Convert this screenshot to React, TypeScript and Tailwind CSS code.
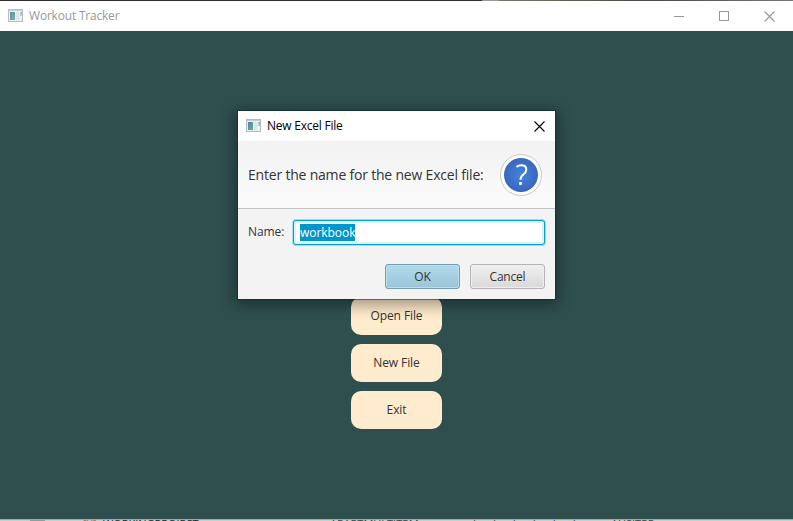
import React from 'react';

function AppIcon({ faded = false }: { faded?: boolean }) {
  return (
    <svg className={faded ? 'opacity-90' : ''} width="16" height="14" viewBox="0 0 16 14" shapeRendering="crispEdges">
      <defs>
        <linearGradient id="screen" x1="0" y1="0" x2="1" y2="1">
          <stop offset="0" stopColor="#4d84b4" />
          <stop offset="1" stopColor="#62b08a" />
        </linearGradient>
      </defs>
      <rect x="0.5" y="0.5" width="14" height="12" fill="#eceeef" stroke="#b5b9bc" />
      <rect x="1" y="1" width="13" height="1" fill="#c5cbd0" />
      <rect x="2" y="3" width="5" height="8" fill="url(#screen)" />
      <rect x="8" y="3" width="3" height="8" fill="#dfe2e4" />
      <rect x="12" y="3" width="2" height="4" fill="#a6d0c6" />
      <rect x="13" y="3" width="1" height="2" fill="#82aed0" />
    </svg>
  );
}

function CloseIcon({ color }: { color: string }) {
  return (
    <svg width="11" height="11" viewBox="0 0 11 11" stroke={color} strokeWidth="1.1">
      <path d="M.5 .5 10.5 10.5M10.5 .5 .5 10.5" />
    </svg>
  );
}

function QuestionIcon() {
  return (
    <svg width="42" height="42" viewBox="0 0 42 42">
      <defs>
        <radialGradient id="ball">
          <stop offset="0" stopColor="#4385dc" />
          <stop offset="1" stopColor="#3a66be" />
        </radialGradient>
      </defs>
      <circle cx="21" cy="21" r="20.5" fill="#fff" stroke="#c9c9c9" />
      <circle cx="21" cy="21" r="17" fill="url(#ball)" />
      <path d="M16.5 12.8C18 11.8 19.5 11.3 21.3 11.3c3.2 0 5 1.7 5 4.2 0 2.2-1 3.5-3 5-2.1 1.6-2.8 2.6-2.8 5.2" fill="none" stroke="#fff" strokeWidth="2" />
      <rect x="19" y="28" width="3" height="3" rx="1" fill="#fff" />
    </svg>
  );
}

function MenuButton({ label, tracking }: { label: string; tracking: string }) {
  return (
    <button className={`flex h-[38px] w-[91px] items-center justify-center rounded-[10px] bg-[#ffebcd] text-[12px] text-[#333] ${tracking}`}>
      {label}
    </button>
  );
}

function Dialog() {
  return (
    <div className="absolute left-[238px] top-[111px] flex h-[188px] w-[317px] flex-col bg-[#f3f3f3] shadow-[0_0_0_1px_rgba(20,35,35,0.5),0_3px_14px_3px_rgba(0,0,0,0.38)]">
      <div className="flex h-[30px] shrink-0 items-center bg-white pl-2 pr-[10px] text-black">
        <AppIcon />
        <span className="ml-[5px] text-[12px] tracking-[-0.23px]">New Excel File</span>
        <span className="ml-auto"><CloseIcon color="#000" /></span>
      </div>
      <div className="flex h-[68px] shrink-0 items-center border-b border-[#c5c5c5] bg-gradient-to-b from-[#f2f2f2] to-[#fbfbfb] pl-[10px] pr-[13px]">
        <span className="whitespace-nowrap text-[14px] tracking-[-0.2px]">Enter the name for the new Excel file:</span>
        <span className="ml-auto"><QuestionIcon /></span>
      </div>
      <div className="flex h-[46px] shrink-0 items-center pl-[10px] pr-[9px]">
        <span className="w-[44px] text-[12px] tracking-[-0.1px]">Name:</span>
        <div className="flex h-[27px] flex-1 items-center rounded-[4px] border border-[#a4dcef] bg-[#039ed3] p-px">
          <div className="flex h-full w-full items-center rounded-[2px] border-2 border-[#dcf1fa] bg-white pl-1">
            <span className="h-[17px] bg-[#0096c9] text-[12px] leading-[17px] tracking-[-0.05px] text-white">workbook</span>
          </div>
        </div>
      </div>
      <div className="flex justify-end gap-[10px] pr-[10px] pt-[9px] text-[12px]">
        <button className="h-[25px] w-[75px] rounded-[3px] border border-[#769dad] bg-gradient-to-b from-[#b1daed] to-[#9bc4d6] shadow-[inset_0_0_0_1px_#b9deee]">OK</button>
        <button className="h-[25px] w-[75px] rounded-[3px] border border-[#b4b4b4] bg-gradient-to-b from-[#f0f0f0] to-[#d9d9d9] tracking-[-0.2px] shadow-[inset_0_0_0_1px_#eeeeee]">Cancel</button>
      </div>
    </div>
  );
}

export default function App() {
  return (
    <div className="relative flex h-[521px] w-[793px] flex-col overflow-hidden bg-[#2f4f4f] font-['Open_Sans','Noto_Sans',sans-serif] text-[#333]">
      <div className="flex h-px shrink-0">
        <div className="w-[482px] bg-[#302e30]" />
        <div className="w-[17px] bg-[#999]" />
        <div className="flex-1 bg-gradient-to-r from-[#77766b] via-[#4a4943] to-[#777]" />
      </div>
      <header className="flex h-[30px] shrink-0 items-center bg-white pl-2 pr-[18px]">
        <AppIcon faded />
        <span className="ml-[5px] text-[12px] tracking-[-0.2px] text-[#999]">Workout Tracker</span>
        <div className="ml-auto flex items-center gap-[35px]">
          <span className="h-px w-[10px] bg-[#999]" />
          <span className="h-[10px] w-[10px] border border-[#999]" />
          <CloseIcon color="#999" />
        </div>
      </header>
      <main className="flex flex-1 flex-col items-center gap-[9px] pt-[266px]">
        <MenuButton label="Open File" tracking="tracking-[-0.1px]" />
        <MenuButton label="New File" tracking="tracking-[-0.1px]" />
        <MenuButton label="Exit" tracking="tracking-[-0.1px]" />
      </main>
      <footer className="flex h-[2px] shrink-0 overflow-hidden border-t border-[#a5a9a9] bg-[#ccc] text-[11px] leading-[11px] text-[#444]">
        <span className="ml-[30px] h-px w-[15px] bg-[#999]" />
        <span className="-mt-[2px] ml-[38px] w-[20px] text-[#b56e3b]">[X]</span>
        <span className="-mt-[2px] w-[227px] text-[#223]">WORKINGPROJECT</span>
        <span className="-mt-[2px] w-[143px]">APARTMULTITPM</span>
        <span className="-mt-[2px] w-[138px] tracking-[7px]">I I I I I I</span>
        <span className="-mt-[2px]">AUSITPP</span>
      </footer>
      <Dialog />
    </div>
  );
}
